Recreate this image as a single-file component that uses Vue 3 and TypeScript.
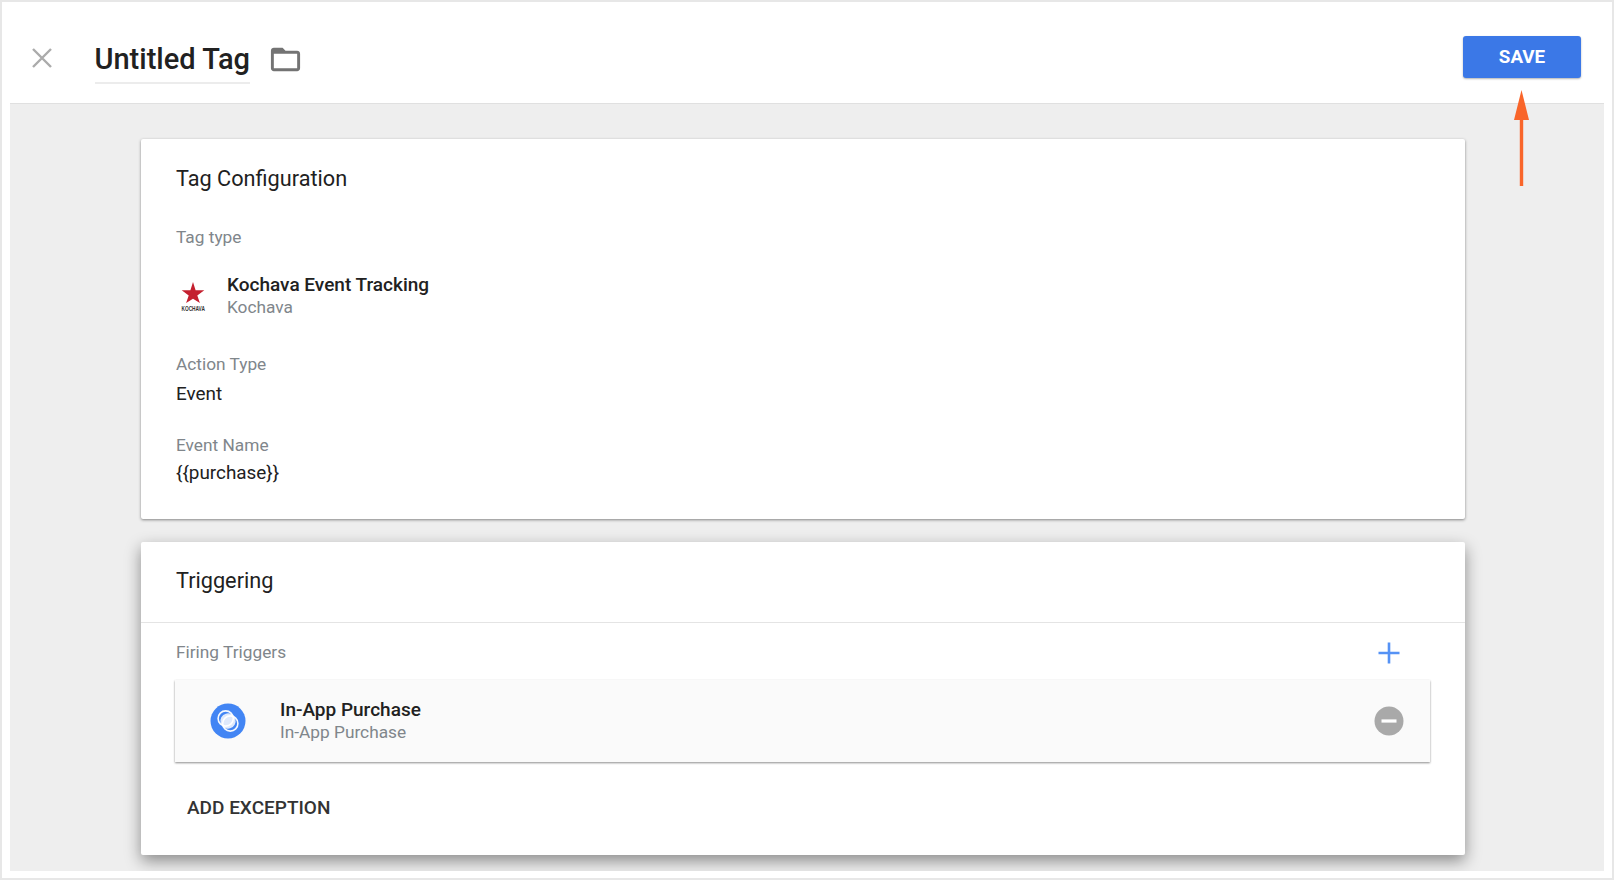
<script setup lang="ts">
interface Field { label: string; value: string }
const fields: Field[] = [
  { label: 'Action Type', value: 'Event' },
  { label: 'Event Name', value: '{{purchase}}' },
]
</script>

<template>
  <div class="frame">
    <header class="top">
      <svg class="close" viewBox="0 0 20 20" width="20" height="20" aria-hidden="true">
        <path d="M1 1 L19 19 M19 1 L1 19" stroke="#ababab" stroke-width="2.4" fill="none" />
      </svg>
      <h1 class="title">Untitled Tag</h1>
      <svg class="folder" viewBox="0 0 24 24" width="35" height="35" aria-hidden="true">
        <path fill="#737373" d="M20 6h-8l-2-2H4c-1.1 0-2 .9-2 2v12c0 1.1.9 2 2 2h16c1.1 0 2-.9 2-2V8c0-1.1-.9-2-2-2zm0 12H4V8h16v10z" />
      </svg>
      <button class="save" type="button">SAVE</button>
      <svg class="arrow" viewBox="0 0 15 96" width="15" height="96" aria-hidden="true">
        <path fill="#f9652a" d="M7.5 0 L15 30 H9.2 V96 H5.8 V30 H0 Z" />
      </svg>
    </header>

    <main class="panel">
      <section class="card first">
        <h2 class="card-title">Tag Configuration</h2>
        <div class="label type-label">Tag type</div>
        <div class="tag-type">
          <div class="logo">
            <svg class="star" viewBox="0 0 24 22" width="24" height="22" aria-hidden="true">
              <path fill="#c4202f" d="M12 1 L14.6 9.3 H23.3 L16.3 14.5 L18.9 22 L12 17.7 L5.1 22 L7.7 14.5 L0.7 9.3 H9.4 Z" />
            </svg>
            <span class="logo-text">KOCHAVA</span>
          </div>
          <div class="two-line">
            <div class="strong">Kochava Event Tracking</div>
            <div class="sub">Kochava</div>
          </div>
        </div>
        <div v-for="f in fields" :key="f.label" class="field">
          <div class="label">{{ f.label }}</div>
          <div class="value">{{ f.value }}</div>
        </div>
      </section>

      <section class="card second">
        <h2 class="card-title trig">Triggering</h2>
        <div class="trig-body">
          <div class="firing-head">
            <div class="label">Firing Triggers</div>
            <svg class="plus" viewBox="0 0 22 22" width="22" height="22" aria-hidden="true">
              <path d="M11 0.5 V21.5 M0.5 11 H21.5" stroke="#5592f5" stroke-width="2.6" fill="none" />
            </svg>
          </div>
          <div class="trigger-row">
            <svg class="trigger-icon" viewBox="0 0 36 36" width="36" height="36" aria-hidden="true">
              <circle cx="18" cy="18" r="17.5" fill="#4285f4" />
              <path d="M21.7 11.3 A7.6 7.6 0 0 1 14.3 24.7 A7.6 7.6 0 0 1 21.7 11.3 Z" fill="#dfe9fb" />
              <circle cx="15.7" cy="15.5" r="7.6" fill="none" stroke="#fff" stroke-width="1.6" opacity="0.95" />
              <circle cx="20.3" cy="20.5" r="7.6" fill="none" stroke="#fff" stroke-width="1.6" opacity="0.95" />
            </svg>
            <div class="two-line row-text">
              <div class="strong">In-App Purchase</div>
              <div class="sub">In-App Purchase</div>
            </div>
            <svg class="minus" viewBox="0 0 30 30" width="30" height="30" aria-hidden="true">
              <circle cx="15" cy="15" r="14.5" fill="#a9a9a9" />
              <rect x="7.5" y="13.4" width="15" height="3.2" fill="#fff" />
            </svg>
          </div>
          <div class="exception">ADD EXCEPTION</div>
        </div>
      </section>
    </main>
  </div>
</template>

<style>
html, body { margin: 0; padding: 0; background: #fff; }
</style>

<style scoped>
.frame {
  box-sizing: border-box;
  width: 1614px;
  height: 880px;
  border: 2px solid #e7e7e7;
  background: #fff;
  display: flex;
  flex-direction: column;
  overflow: hidden;
  font-family: Roboto, "Noto Sans", sans-serif;
  color: #212121;
}
.top {
  position: relative;
  flex: none;
  height: 101px;
  display: flex;
  align-items: flex-start;
  padding: 0 31px 0 30px;
}
.close { margin-top: 46px; flex: none; }
.title {
  margin: 38px 0 0 42.5px;
  padding-bottom: 4px;
  border-bottom: 2px solid #ececec;
  font-size: 29px;
  line-height: 38px;
  font-weight: 500;
  color: #212121;
}
.folder { margin: 40px 0 0 17.5px; flex: none; }
.save {
  margin: 34px 0 0 auto;
  width: 118px;
  height: 42px;
  padding: 0 0 1px;
  border: none;
  border-radius: 3px;
  background: #3b78e7;
  color: #fff;
  font-family: inherit;
  font-size: 18.8px;
  font-weight: 700;
  box-shadow: 0 1px 2px rgba(0, 0, 0, 0.3);
}
.arrow { position: absolute; right: 83px; top: 88px; z-index: 2; }
.panel {
  flex: 1;
  margin: 0 8px 7px 8px;
  padding: 35px 139px 0 131px;
  background: #eee;
  border-top: 1px solid #e0e0e0;
  overflow: hidden;
}
.card {
  background: #fff;
  border-radius: 2px;
  padding: 0 35px;
}
.first {
  height: 380px;
  box-sizing: border-box;
  box-shadow: 0 1px 3px rgba(0, 0, 0, 0.45);
}
.second {
  margin-top: 23px;
  height: 313px;
  box-sizing: border-box;
  padding: 0;
  box-shadow: 0 6px 16px rgba(0, 0, 0, 0.42);
}
.card-title {
  margin: 0;
  padding-top: 26px;
  font-size: 21.7px;
  line-height: 28px;
  font-weight: 400;
  color: #212121;
}
.label {
  font-size: 17.3px;
  line-height: 22px;
  color: #80868b;
}
.type-label { margin-top: 33px; }
.tag-type {
  display: flex;
  align-items: center;
  gap: 16px;
  margin-top: 25px;
  margin-left: -1px;
}
.logo {
  flex: none;
  box-sizing: border-box;
  width: 36px;
  height: 36px;
  padding-top: 3px;
  display: flex;
  flex-direction: column;
  align-items: center;
  overflow: visible;
}
.star { flex: none; }
.logo-text {
  display: block;
  margin-top: 1px;
  font-family: "Liberation Sans", sans-serif;
  font-size: 7px;
  line-height: 9px;
  font-weight: 700;
  white-space: nowrap;
  color: #333;
  transform: scaleX(0.68);
}
.two-line { line-height: 22px; }
.strong { font-size: 19px; font-weight: 500; color: #212121; line-height: 23px; }
.sub { font-size: 17.3px; color: #80868b; line-height: 22px; }
.field { margin-top: 35px; }
.field + .field { margin-top: 28px; }
.value { font-size: 18.9px; line-height: 24px; margin-top: 7px; color: #212121; }
.field + .field .value { margin-top: 5px; }
.trig { padding: 25px 0 0 35px; height: 81px; box-sizing: border-box; border-bottom: 1px solid #e4e4e4; }
.trig-body { padding: 0 35px; }
.firing-head {
  display: flex;
  justify-content: space-between;
  align-items: center;
  height: 57px;
  padding-right: 30px;
}
.plus { margin-top: 2px; }
.trigger-row {
  display: flex;
  align-items: center;
  height: 82px;
  margin-left: -1px;
  background: #fafafa;
  box-shadow: 0 1px 2px rgba(0, 0, 0, 0.45);
  padding: 0 26px 0 35px;
}
.trigger-icon { flex: none; }
.row-text { margin: 0 0 2px 34px; flex: 1; }
.minus { flex: none; }
.exception {
  margin: 34px 0 0 11px;
  font-size: 19px;
  line-height: 24px;
  font-weight: 500;
  color: #333;
}
</style>
